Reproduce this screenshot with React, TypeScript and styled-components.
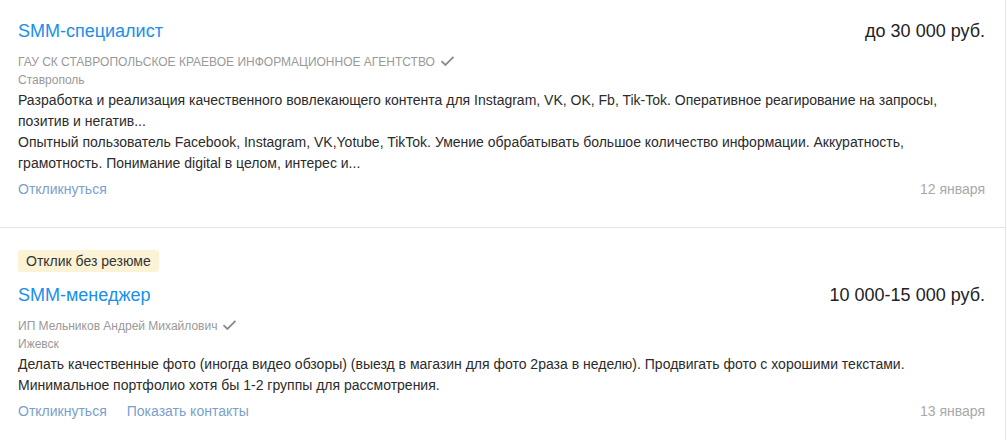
import { createGlobalStyle } from 'styled-components';
import styled from 'styled-components';

const GlobalStyle = createGlobalStyle`
    body {
        margin: 0;
        background: #fff;
        font-family: "Liberation Sans", Arial, sans-serif;
    }
`;

type Vacancy = {
    title: string;
    salary: string;
    company: string;
    city: string;
    description: string[];
    noResume?: boolean;
    showContacts?: boolean;
    date: string;
};

const vacancies: Vacancy[] = [
    {
        title: "SMM-специалист",
        salary: "до 30 000 руб.",
        company: "ГАУ СК СТАВРОПОЛЬСКОЕ КРАЕВОЕ ИНФОРМАЦИОННОЕ АГЕНТСТВО",
        city: "Ставрополь",
        description: [
            "Разработка и реализация качественного вовлекающего контента для Instagram, VK, OK, Fb, Tik-Tok. Оперативное реагирование на запросы, позитив и негатив...",
            "Опытный пользователь Facebook, Instagram, VK,Yotube, TikTok. Умение обрабатывать большое количество информации. Аккуратность, грамотность. Понимание digital в целом, интерес и...",
        ],
        date: "12 января",
    },
    {
        title: "SMM-менеджер",
        salary: "10 000-15 000 руб.",
        company: "ИП Мельников Андрей Михайлович",
        city: "Ижевск",
        description: [
            "Делать качественные фото (иногда видео обзоры) (выезд в магазин для фото 2раза в неделю). Продвигать фото с хорошими текстами. Минимальное портфолио хотя бы 1-2 группы для рассмотрения.",
        ],
        noResume: true,
        showContacts: true,
        date: "13 января",
    },
];

function CheckIcon() {
    return (
        <svg width="15" height="12" viewBox="0 0 15 12" fill="none">
            <path d="M1.5 6.2 L5.4 10 L13.5 1.8" stroke="#8a8a8a" strokeWidth="1.8" />
        </svg>
    );
}

function App() {
    return (
        <>
            <GlobalStyle />
            <List>
                {vacancies.map(v => (
                    <Card key={v.title}>
                        {v.noResume && <Badge>Отклик без резюме</Badge>}
                        <Header>
                            <Title href="#">{v.title}</Title>
                            <Salary>{v.salary}</Salary>
                        </Header>
                        <Company>
                            {v.company}
                            <CheckIcon />
                        </Company>
                        <City>{v.city}</City>
                        <Description>
                            {v.description.map(d => <p key={d}>{d}</p>)}
                        </Description>
                        <Footer>
                            <Actions>
                                <Action href="#">Откликнуться</Action>
                                {v.showContacts && <Action href="#">Показать контакты</Action>}
                            </Actions>
                            <DateLabel>{v.date}</DateLabel>
                        </Footer>
                    </Card>
                ))}
            </List>
        </>
    );
}

const List = styled.div`
    width: 1005px;
    border-right: 1px solid #e4e4e4;
    min-height: 440px;
`;

const Card = styled.div`
    padding: 19px 20px 27px 18px;
    border-bottom: 1px solid #e6e6e6;

    & + & {
        padding-top: 22px;
    }
`;

const Badge = styled.div`
    display: inline-block;
    height: 22px;
    line-height: 22px;
    padding: 0 8px;
    margin-bottom: 11px;
    background: #fcf3d6;
    border-radius: 3px;
    font-size: 14px;
    color: #333;
`;

const Header = styled.div`
    display: flex;
    justify-content: space-between;
    align-items: center;
    height: 24px;
    margin-bottom: 10px;
`;

const Title = styled.a`
    font-size: 18px;
    color: #1990ec;
    text-decoration: none;
`;

const Salary = styled.div`
    font-size: 18px;
    color: #222;
`;

const Company = styled.div`
    display: flex;
    align-items: center;
    gap: 5px;
    font-size: 12px;
    line-height: 18px;
    color: #999;

    svg {
        margin-top: -2px;
    }
`;

const City = styled.div`
    font-size: 12px;
    line-height: 18px;
    color: #999;
`;

const Description = styled.div`
    margin-top: 1px;
    font-size: 14px;
    line-height: 21px;
    color: #2b2b2b;

    p {
        margin: 0;
    }
`;

const Footer = styled.div`
    display: flex;
    justify-content: space-between;
    align-items: center;
    margin-top: 5px;
    line-height: 21px;
    font-size: 14px;
`;

const Actions = styled.div`
    display: flex;
    gap: 20px;
`;

const Action = styled.a`
    color: #7a9fcc;
    text-decoration: none;
`;

const DateLabel = styled.div`
    color: #a9a9a9;
`;

export default App;
